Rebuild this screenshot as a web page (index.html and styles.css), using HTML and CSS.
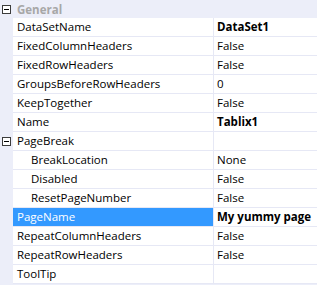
FILE: index.html
```html
<!DOCTYPE html>
<html>
<head>
<meta charset="utf-8">
<link rel="stylesheet" href="styles.css">
</head>
<body>
<div class="grid">
  <div class="cat">
    <span class="gut"><span class="box"></span></span>
    <span class="cat-name">General</span>
  </div>
  <div class="row"><span class="gut"></span><span class="name">DataSetName</span><span class="val bold">DataSet1</span></div>
  <div class="row"><span class="gut"></span><span class="name">FixedColumnHeaders</span><span class="val">False</span></div>
  <div class="row"><span class="gut"></span><span class="name">FixedRowHeaders</span><span class="val">False</span></div>
  <div class="row"><span class="gut"></span><span class="name">GroupsBeforeRowHeaders</span><span class="val">0</span></div>
  <div class="row"><span class="gut"></span><span class="name">KeepTogether</span><span class="val">False</span></div>
  <div class="row"><span class="gut"></span><span class="name">Name</span><span class="val bold">Tablix1</span></div>
  <div class="row"><span class="gut"><span class="box"></span></span><span class="name">PageBreak</span><span class="val"></span></div>
  <div class="row"><span class="gut"></span><span class="name sub">BreakLocation</span><span class="val">None</span></div>
  <div class="row"><span class="gut"></span><span class="name sub">Disabled</span><span class="val">False</span></div>
  <div class="row"><span class="gut"></span><span class="name sub">ResetPageNumber</span><span class="val">False</span></div>
  <div class="row"><span class="gut"></span><span class="name sel">PageName</span><span class="val bold">My yummy page</span></div>
  <div class="row"><span class="gut"></span><span class="name">RepeatColumnHeaders</span><span class="val">False</span></div>
  <div class="row"><span class="gut"></span><span class="name">RepeatRowHeaders</span><span class="val">False</span></div>
  <div class="row"><span class="gut"></span><span class="name">ToolTip</span><span class="val"></span></div>
</div>
</body>
</html>
```

FILE: styles.css
```css
html, body {
  margin: 0;
  padding: 0;
  background: #eceef9;
}
.grid {
  width: 317px;
  height: 285px;
  font-family: "Open Sans", "Noto Sans", sans-serif;
  font-size: 11.5px;
  color: #000;
  background: #eceef9;
}
.cat {
  display: flex;
  height: 18px;
  align-items: center;
}
.gut {
  width: 13px;
  flex: none;
  align-self: stretch;
  display: flex;
  align-items: center;
  justify-content: flex-start;
  background: #eceef9;
}
.box {
  position: relative;
  width: 7px;
  height: 7px;
  margin-left: 2px;
  border: 1px solid #3c3c3c;
  background: #fff;
}
.box::after {
  content: "";
  position: absolute;
  left: 1px;
  top: 3px;
  width: 5px;
  height: 1px;
  background: #000;
}
.cat-name {
  padding-left: 4px;
  font-weight: bold;
  color: #a7a7a7;
}
.row {
  display: flex;
  height: 19px;
}
.name, .val {
  background: #fff;
  border-bottom: 1px solid #e6e8f5;
  line-height: 18px;
  white-space: nowrap;
  overflow: hidden;
}
.name {
  width: 196px;
  padding-left: 4px;
  border-right: 1px solid #e6e8f5;
  flex: none;
}
.name.sub {
  width: 182px;
  padding-left: 18px;
}
.name.sel {
  background: #3399ff;
  color: #fff;
}
.val {
  flex: 1;
  padding-left: 3px;
}
.bold {
  font-weight: bold;
}
```
